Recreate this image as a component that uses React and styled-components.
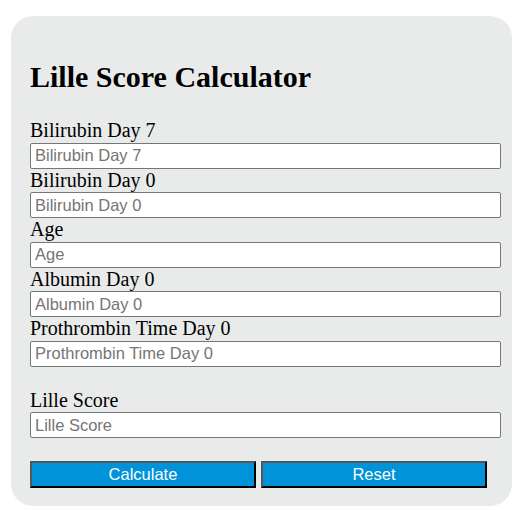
import React, { useState } from 'react';
import styled, { createGlobalStyle } from 'styled-components';

const fields = [
  'Bilirubin Day 7',
  'Bilirubin Day 0',
  'Age',
  'Albumin Day 0',
  'Prothrombin Time Day 0',
];

const LilleCalculator = () => {
  const [values, setValues] = useState({});
  const [score, setScore] = useState('');

  const handleReset = () => {
    setValues({});
    setScore('');
  };

  return (
    <>
      <GlobalStyle />
      <Card>
        <Title>Lille Score Calculator</Title>
        {fields.map((name) => (
          <Field key={name}>
            <Label>{name}</Label>
            <Input
              type="text"
              placeholder={name}
              value={values[name] || ''}
              onChange={(e) => setValues({ ...values, [name]: e.target.value })}
            />
          </Field>
        ))}
        <Field $spaced>
          <Label>Lille Score</Label>
          <Input type="text" placeholder="Lille Score" value={score} readOnly />
        </Field>
        <Buttons>
          <Button type="button">Calculate</Button>
          <Button type="button" onClick={handleReset}>Reset</Button>
        </Buttons>
      </Card>
    </>
  );
};

export default LilleCalculator;

// Styled Components

const GlobalStyle = createGlobalStyle`
  body {
    margin: 0;
    background: #fff;
    font-family: 'Liberation Serif', 'Times New Roman', serif;
  }
`;

const Card = styled.div`
  box-sizing: border-box;
  width: 501px;
  margin: 16px 0 0 11px;
  padding: 43px 10px 18px 19px;
  background-color: #e9ebeb;
  border-radius: 22px;
`;

const Title = styled.h1`
  margin: 0 0 24px;
  font-size: 30px;
  line-height: 36px;
  font-weight: bold;
  color: #000;
`;

const Field = styled.div`
  display: flex;
  flex-direction: column;
  margin-top: ${(p) => (p.$spaced ? '22px' : '0')};
`;

const Label = styled.label`
  font-size: 20px;
  line-height: 23.5px;
  color: #000;
`;

const Input = styled.input`
  box-sizing: border-box;
  width: 471px;
  height: 26px;
  padding: 0 4px;
  font-family: 'Liberation Sans', Arial, sans-serif;
  font-size: 16.5px;
  color: #000;
  background: #fff;
  border: 1px solid #767676;
  border-radius: 2px;
  outline: none;

  &::placeholder {
    color: #757575;
  }
`;

const Buttons = styled.div`
  display: flex;
  gap: 5px;
  margin-top: 23px;
`;

const Button = styled.button`
  box-sizing: border-box;
  width: 226px;
  height: 27px;
  padding: 0;
  font-family: 'Liberation Sans', Arial, sans-serif;
  font-size: 16.5px;
  color: #fff;
  background-color: #0093d9;
  border: 2px solid;
  border-color: #555 #000 #000 #555;
  cursor: pointer;
`;
